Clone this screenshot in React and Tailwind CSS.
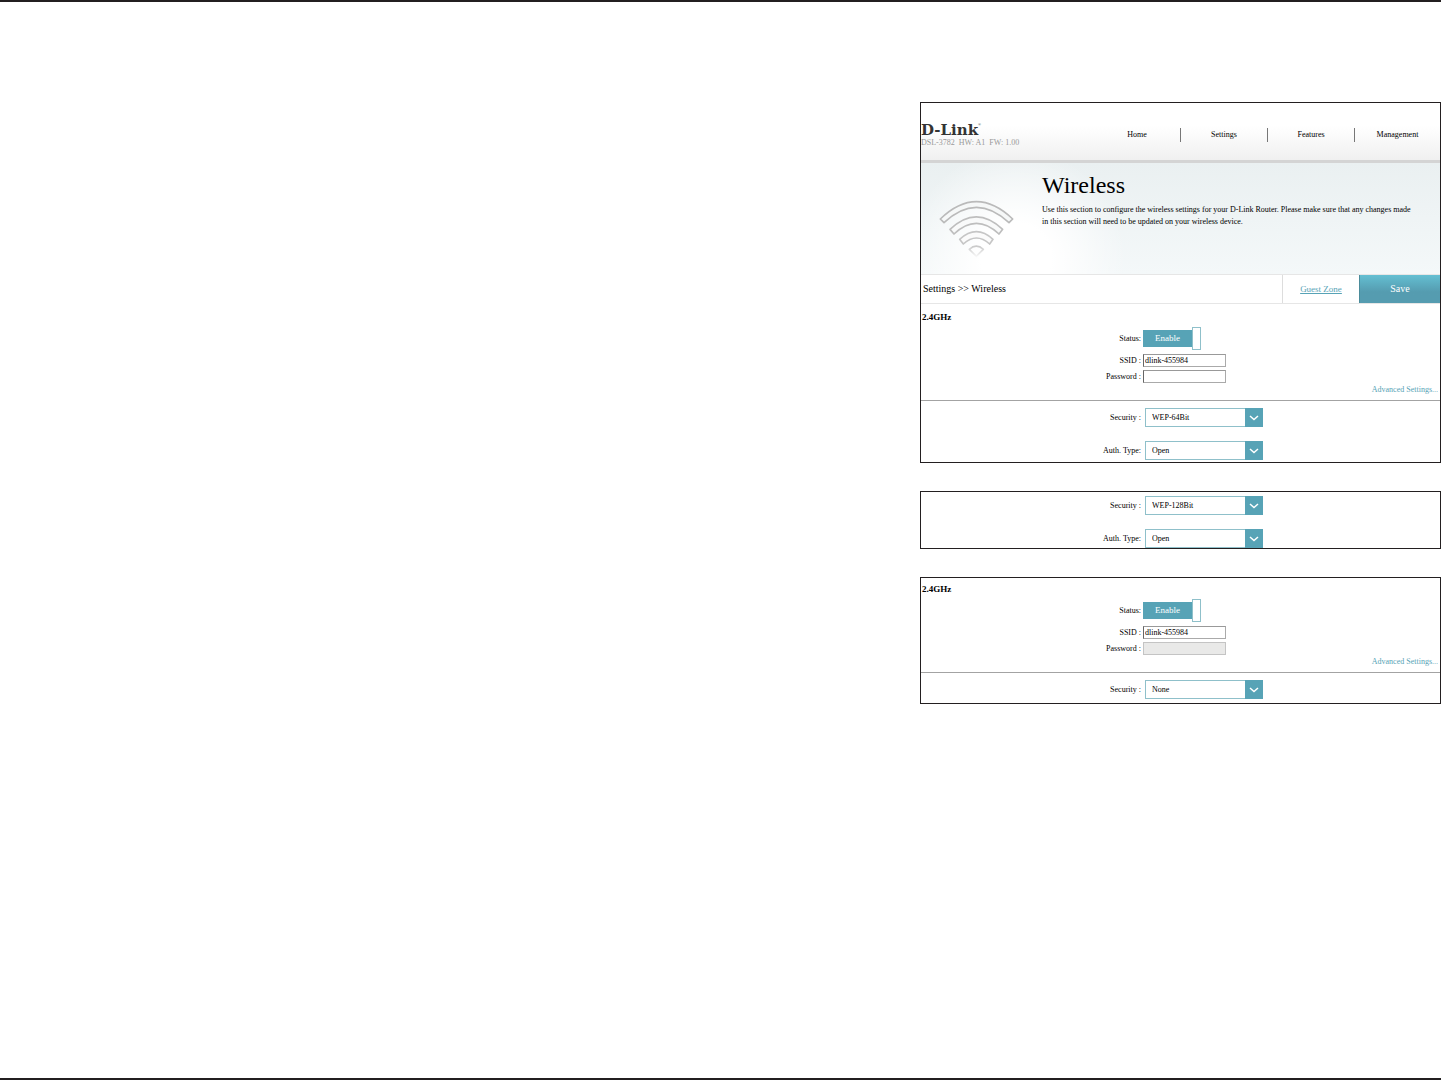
import { useId } from "react";

function Logo() {
  return (
    <div className="flex h-[14px] items-start text-[#333]">
      <span className="font-['DejaVu_Serif'] text-[15px] leading-[14px] font-bold">D-Link</span>
      <span className="text-[4px] leading-[4px]">®</span>
    </div>
  );
}

function WifiIcon() {
  return (
    <svg viewBox="70 115 231 180" className="h-[60px] w-[77px]" fill="none" strokeWidth="5" strokeLinejoin="round" aria-hidden="true">
      <defs>
        <linearGradient id="wifi-fade" x1="0" y1="0" x2="0" y2="1">
          <stop offset="0" stopColor="#c9c9c9" />
          <stop offset="1" stopColor="#f6f6f6" />
        </linearGradient>
      </defs>
      <path stroke="#bababa" fill="#f6f8f8" d="M77 175 Q185 71 294 175 L283 186 Q185 94 88 186 Z" />
      <path stroke="#bebebe" fill="#f9fafa" d="M106 206 Q185 131 264 206 L253 220 Q185 156 118 220 Z" />
      <path stroke="#c6c6c6" fill="#fbfbfb" d="M135 236 Q185 190 235 236 L225 250 Q185 214 146 250 Z" />
      <path stroke="url(#wifi-fade)" d="M164 266 Q185 247 206 266 L185 287 Z" />
    </svg>
  );
}

function Chevron() {
  return (
    <svg viewBox="0 0 18 19" className="h-full w-full" fill="none" stroke="#fff" strokeWidth="1.5" aria-hidden="true">
      <path d="M5 8 L9 11.500 L13 8" />
    </svg>
  );
}

const ROW = "grid grid-cols-[220px_1fr] items-center gap-x-[2px]";

function SelectRow({ label, value }) {
  const id = useId();
  return (
    <div className={ROW}>
      <label htmlFor={id} className="text-right">{label}</label>
      <div className="relative ml-[2px] h-[19px] w-[118px]">
        <select
          id={id}
          defaultValue={value}
          className="block h-full w-full appearance-none rounded-none border border-[#8fc0ca] bg-white pr-5 pl-[6px] text-[8px]"
        >
          <option>{value}</option>
        </select>
        <span className="pointer-events-none absolute inset-y-0 right-0 w-[18px] bg-[#57a3b6]">
          <Chevron />
        </span>
      </div>
    </div>
  );
}

function InputRow({ label, ...props }) {
  const id = useId();
  return (
    <div className={ROW}>
      <label htmlFor={id} className="text-right">{label}</label>
      <input
        id={id}
        className="h-[13px] w-[83px] rounded-none border border-[#aaa] border-t-[#999] border-l-[#666] bg-white px-px text-[8px] disabled:border-[#c4c4c4] disabled:bg-[#e9e9e8]"
        {...props}
      />
    </div>
  );
}

function StatusRow() {
  const id = useId();
  return (
    <div className={ROW}>
      <span id={id} className="text-right">Status:</span>
      <button type="button" role="switch" aria-checked="true" aria-labelledby={id} className="flex items-center justify-self-start">
        <span className="h-[17px] w-[49px] bg-[#57a3b6] text-center text-[9px] leading-[17px] text-white">Enable</span>
        <span className="h-[23px] w-[9px] border border-[#8fc0ca] bg-white" />
      </button>
    </div>
  );
}

function RadioSettings({ passwordDisabled = false }) {
  return (
    <section className="pt-[5px]">
      <h2 className="pl-px text-[9px] leading-3 font-bold">2.4GHz</h2>
      <div className="mt-1 flex flex-col">
        <StatusRow />
        <div className="mt-1 flex flex-col gap-[3px]">
          <InputRow label="SSID :" type="text" defaultValue="dlink-455984" />
          <InputRow label="Password :" type="password" disabled={passwordDisabled} />
        </div>
      </div>
      <div className="border-b border-[#a3a3a3] pt-[2px] pr-[2px] pb-[5px] text-right">
        <a href="#advanced" className="text-[#57a3b6]">Advanced Settings...</a>
      </div>
    </section>
  );
}

function Panel({ children }) {
  return <div className="overflow-hidden border border-[#231f20] bg-white">{children}</div>;
}

export default function App() {
  return (
    <main className="flex min-h-screen flex-col items-end border-y-2 border-[#231f20] bg-white pt-[100px] font-['Liberation_Serif',serif] text-[8px] leading-[10px] text-black">
      <div className="flex w-[521px] max-w-full flex-col gap-7">
        <Panel>
          <header className="flex h-[60px] justify-between border-b-[3px] border-[#d4d4d4] bg-linear-to-b from-white from-40% to-[#f0f0f0]">
            <div className="pt-5">
              <Logo />
              <p className="mt-px whitespace-pre text-[#999]">DSL-3782  HW: A1  FW: 1.00</p>
            </div>
            <nav className="mt-[25px] grid h-[13px] w-[346px] grid-cols-[87px_87px_87px_1fr] divide-x divide-[#777] text-center leading-[14px]">
              <a href="#home">Home</a>
              <a href="#settings">Settings</a>
              <a href="#features">Features</a>
              <a href="#management">Management</a>
            </nav>
          </header>
          <div className="flex h-[111px] bg-[radial-gradient(circle_at_95px_95px,#fff_35px,transparent_110px),linear-gradient(#eaf0f1,#f4f8f9)]">
            <div className="w-[121px] shrink-0 pt-9 pl-[17px]">
              <WifiIcon />
            </div>
            <div className="pt-[10px]">
              <h1 className="text-2xl leading-6">Wireless</h1>
              <p className="mt-[7px] leading-3">
                Use this section to configure the wireless settings for your D-Link Router. Please make sure that any changes made
                <br />
                in this section will need to be updated on your wireless device.
              </p>
            </div>
          </div>
          <div className="flex h-[30px] border-y border-[#e6e6e6] text-[10px] leading-7">
            <p className="grow pl-[2px]">Settings &gt;&gt; Wireless</p>
            <a href="#guest-zone" className="w-[77px] border-l border-[#ddd] text-center text-[9px] text-[#57a3b6] underline">Guest Zone</a>
            <button type="button" className="w-[81px] border-l border-[#4b8c9b] bg-linear-to-b from-[#64bfd2] to-[#559cb0] to-60% text-white">Save</button>
          </div>
          <div className="pt-[2px]">
            <RadioSettings />
          </div>
          <div className="flex flex-col gap-[14px] pt-[7px] pb-[2px]">
            <SelectRow label="Security :" value="WEP-64Bit" />
            <SelectRow label="Auth. Type:" value="Open" />
          </div>
        </Panel>
        <Panel>
          <div className="flex flex-col gap-[14px] pt-1">
            <SelectRow label="Security :" value="WEP-128Bit" />
            <SelectRow label="Auth. Type:" value="Open" />
          </div>
        </Panel>
        <Panel>
          <RadioSettings passwordDisabled />
          <div className="pt-[7px] pb-1">
            <SelectRow label="Security :" value="None" />
          </div>
        </Panel>
      </div>
    </main>
  );
}
